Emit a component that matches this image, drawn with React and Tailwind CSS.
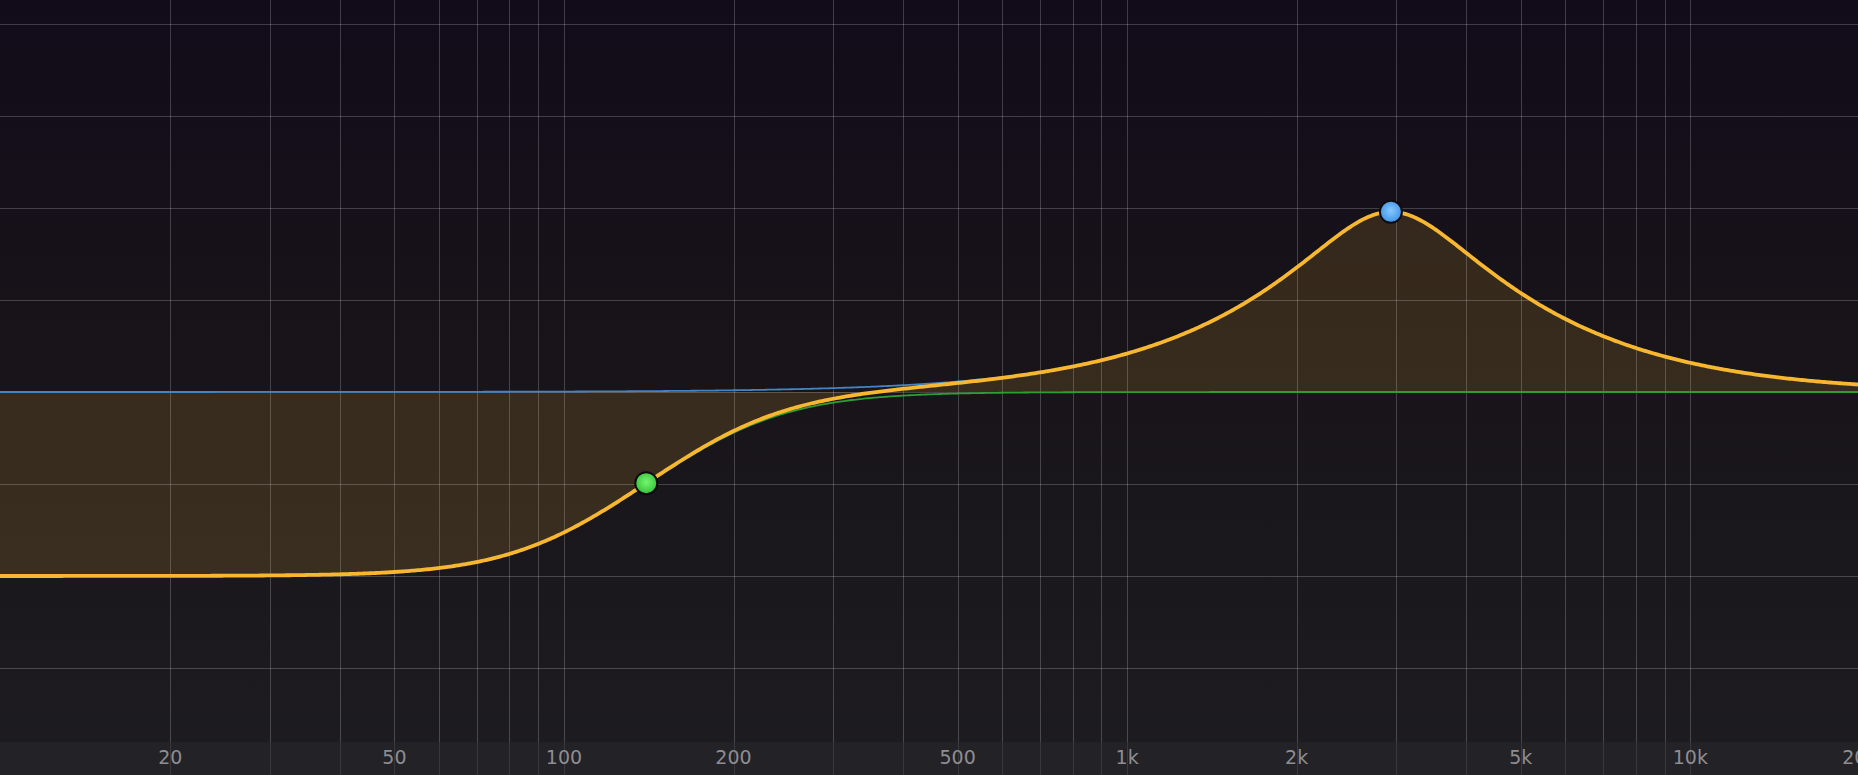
import React from 'react';

const W = 1858;
const CHART_H = 742;
const FS = 192000;
const ZERO_Y = 392;
const PX_PER_DB = 92 / 6;

// log frequency axis: 10 Hz .. 20 kHz across the width
const freqToX = (f) => (Math.log10(f) - 1) * 563.17 + 0.8;
const xToFreq = (x) => Math.pow(10, (x - 0.8) / 563.17 + 1);
const dbToY = (db) => ZERO_Y - db * PX_PER_DB;

const peaking = (f0, gain, q) => {
  const A = Math.pow(10, gain / 40);
  const w0 = (2 * Math.PI * f0) / FS;
  const alpha = Math.sin(w0) / (2 * q);
  const c = Math.cos(w0);
  return { b0: 1 + alpha * A, b1: -2 * c, b2: 1 - alpha * A, a0: 1 + alpha / A, a1: -2 * c, a2: 1 - alpha / A };
};

const lowShelf = (f0, gain, s = 1) => {
  const A = Math.pow(10, gain / 40);
  const w0 = (2 * Math.PI * f0) / FS;
  const c = Math.cos(w0);
  const alpha = (Math.sin(w0) / 2) * Math.sqrt((A + 1 / A) * (1 / s - 1) + 2);
  const sa = 2 * Math.sqrt(A) * alpha;
  return {
    b0: A * (A + 1 - (A - 1) * c + sa),
    b1: 2 * A * (A - 1 - (A + 1) * c),
    b2: A * (A + 1 - (A - 1) * c - sa),
    a0: A + 1 + (A - 1) * c + sa,
    a1: -2 * (A - 1 + (A + 1) * c),
    a2: A + 1 + (A - 1) * c - sa,
  };
};

const magDb = (k, f) => {
  const w = (2 * Math.PI * f) / FS;
  const nr = k.b0 + k.b1 * Math.cos(w) + k.b2 * Math.cos(2 * w);
  const ni = -(k.b1 * Math.sin(w) + k.b2 * Math.sin(2 * w));
  const dr = k.a0 + k.a1 * Math.cos(w) + k.a2 * Math.cos(2 * w);
  const di = -(k.a1 * Math.sin(w) + k.a2 * Math.sin(2 * w));
  return 10 * Math.log10((nr * nr + ni * ni) / (dr * dr + di * di));
};

const shelf = { f: 140, gain: -12, k: lowShelf(140, -12) };
const bell = { f: 2940, gain: 11.75, k: peaking(2940, 11.75, 0.8) };

const buildPath = (fn) => {
  let d = '';
  for (let x = 0; x <= W; x += 2) {
    const y = dbToY(fn(xToFreq(x)));
    d += `${x === 0 ? 'M' : 'L'}${x},${y.toFixed(2)} `;
  }
  return d;
};

const sumPath = buildPath((f) => magDb(shelf.k, f) + magDb(bell.k, f));
const shelfPath = buildPath((f) => magDb(shelf.k, f));
const bellPath = buildPath((f) => magDb(bell.k, f));
const fillPath = `${sumPath} L${W},${ZERO_Y} L0,${ZERO_Y} Z`;

const gridFreqs = [];
[10, 100, 1000].forEach((dec) => {
  for (let i = 2; i <= 9; i++) gridFreqs.push(dec * i);
  gridFreqs.push(dec * 10);
});
gridFreqs.push(20000);
const uniqueFreqs = [...new Set(gridFreqs)].filter((f) => f >= 20);

const gridRows = [24, 116, 208, 300, 392, 484, 576, 668];

const labels = [
  { f: 20, t: '20' },
  { f: 50, t: '50' },
  { f: 100, t: '100' },
  { f: 200, t: '200' },
  { f: 500, t: '500' },
  { f: 1000, t: '1k' },
  { f: 2000, t: '2k' },
  { f: 5000, t: '5k' },
  { f: 10000, t: '10k' },
  { f: 20000, t: '20k' },
];

const Handle = ({ x, y, id }) => (
  <circle cx={x} cy={y} r="11" fill={`url(#${id})`} stroke="#0c0c0e" strokeWidth="2" />
);

const App = () => {
  const shelfY = dbToY(magDb(shelf.k, shelf.f) + magDb(bell.k, shelf.f));
  const bellY = dbToY(magDb(shelf.k, bell.f) + magDb(bell.k, bell.f));

  return (
    <div className="w-[1858px] h-[775px] flex flex-col overflow-hidden bg-linear-to-b from-[#120b1a] via-[#171319] via-40% to-[#1d1c20] font-['DejaVu_Sans',sans-serif]">
      <div className="relative flex-1">
        <svg width={W} height={CHART_H} className="block">
          <defs>
            <radialGradient id="greenDot" cx="50%" cy="45%" r="55%">
              <stop offset="0%" stopColor="#74f56f" />
              <stop offset="100%" stopColor="#34c23a" />
            </radialGradient>
            <radialGradient id="blueDot" cx="50%" cy="45%" r="55%">
              <stop offset="0%" stopColor="#86c8ff" />
              <stop offset="100%" stopColor="#3f92e6" />
            </radialGradient>
          </defs>

          <path d={fillPath} fill="rgba(247,183,51,0.14)" />

          {gridRows.map((y) => (
            <line key={y} x1="0" x2={W} y1={y + 0.5} y2={y + 0.5} stroke="rgba(255,255,255,0.2)" strokeWidth="1" />
          ))}
          {uniqueFreqs.map((f) => {
            const x = Math.round(freqToX(f)) + 0.5;
            return <line key={f} x1={x} x2={x} y1="0" y2={CHART_H} stroke="rgba(255,255,255,0.2)" strokeWidth="1" />;
          })}

          <path d={bellPath} fill="none" stroke="#4383c6" strokeWidth="1.8" />
          <path d={shelfPath} fill="none" stroke="#2e9d34" strokeWidth="1.8" />
          <path d={sumPath} fill="none" stroke="#f7b731" strokeWidth="3.8" strokeLinejoin="round" />

          <Handle x={freqToX(shelf.f)} y={shelfY} id="greenDot" />
          <Handle x={freqToX(bell.f)} y={bellY} id="blueDot" />
        </svg>
      </div>

      <div className="relative h-[33px] bg-[#232226]">
        <svg width={W} height="33" className="absolute inset-0">
          {uniqueFreqs.map((f) => {
            const x = Math.round(freqToX(f)) + 0.5;
            return <line key={f} x1={x} x2={x} y1="0" y2="33" stroke="rgba(255,255,255,0.1)" strokeWidth="1" />;
          })}
        </svg>
        {labels.map((l) => (
          <span
            key={l.t}
            className="absolute top-[3px] -translate-x-1/2 text-[19px] leading-[24px] text-[#8e8d92]"
            style={{ left: freqToX(l.f) }}
          >
            {l.t}
          </span>
        ))}
      </div>
    </div>
  );
};

export default App;
